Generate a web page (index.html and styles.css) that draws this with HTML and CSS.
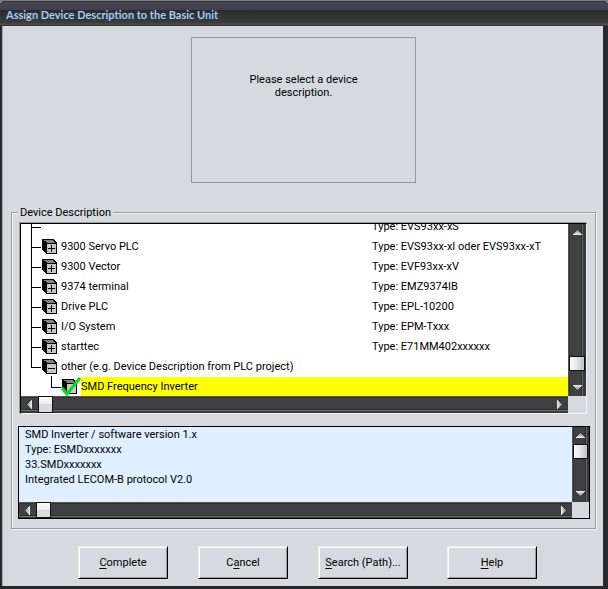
FILE: index.html
```html
<!DOCTYPE html>
<html lang="en">
<head>
<meta charset="utf-8">
<title>Assign Device Description to the Basic Unit</title>
<link rel="stylesheet" href="styles.css">
</head>
<body>
<svg class="defs" aria-hidden="true">
  <defs>
    <symbol id="cube" viewBox="0 0 15 15" shape-rendering="crispEdges">
      <path d="M0 0H12V1H13V2H14V3H15V15H4V14H3V13H2V12H1V11H0Z" fill="#000"/>
      <path d="M2 1H11V2H12V3H13V4H5V3H4V2H2Z" fill="#848484"/>
      <path d="M5 5H14V14H5Z" fill="#c6c6c6"/>
    </symbol>
    <symbol id="plus" viewBox="0 0 15 15" shape-rendering="crispEdges">
      <use href="#cube"/>
      <path d="M6 9H13V10H6ZM9 6H10V13H9Z"/>
    </symbol>
    <symbol id="minus" viewBox="0 0 15 15" shape-rendering="crispEdges">
      <use href="#cube"/>
      <path d="M6 9H13V10H6Z"/>
    </symbol>
    <symbol id="checked" viewBox="0 0 20 19">
      <svg x="1" y="2" width="15" height="15"><use href="#cube"/></svg>
      <path d="M1 11L6 17L19 1" fill="none" stroke="#00e020" stroke-width="3"/>
    </symbol>
    <linearGradient id="metal" x1="0" y1="0" x2="0" y2="1">
      <stop offset="0" stop-color="#8a8a8e"/>
      <stop offset="1" stop-color="#f2f2f2"/>
    </linearGradient>
    <symbol id="arrow" viewBox="0 0 9 5" shape-rendering="crispEdges">
      <path d="M4 0H5V1H6V2H7V3H8V4H9V5H0V4H1V3H2V2H3V1H4Z" fill="url(#metal)"/>
    </symbol>
  </defs>
</svg>

<div class="window">
  <header class="titlebar"><h1>Assign Device Description to the Basic Unit</h1></header>
  <main class="content">
    <section class="preview"><p>Please select a device description.</p></section>

    <fieldset class="group">
      <legend>Device Description</legend>

      <div class="pane tree-pane">
        <ul class="tree" role="tree">
          <li class="node" role="treeitem"><span class="branch"></span><span class="name"></span><span class="type">Type: EVS93xx-xS</span></li>
          <li class="node" role="treeitem"><span class="branch"></span><svg class="icon"><use href="#plus"/></svg><span class="name">9300 Servo PLC</span><span class="type">Type: EVS93xx-xI oder EVS93xx-xT</span></li>
          <li class="node" role="treeitem"><span class="branch"></span><svg class="icon"><use href="#plus"/></svg><span class="name">9300 Vector</span><span class="type">Type: EVF93xx-xV</span></li>
          <li class="node" role="treeitem"><span class="branch"></span><svg class="icon"><use href="#plus"/></svg><span class="name">9374 terminal</span><span class="type">Type: EMZ9374IB</span></li>
          <li class="node" role="treeitem"><span class="branch"></span><svg class="icon"><use href="#plus"/></svg><span class="name">Drive PLC</span><span class="type">Type: EPL-10200</span></li>
          <li class="node" role="treeitem"><span class="branch"></span><svg class="icon"><use href="#plus"/></svg><span class="name">I/O System</span><span class="type">Type: EPM-Txxx</span></li>
          <li class="node" role="treeitem"><span class="branch"></span><svg class="icon"><use href="#plus"/></svg><span class="name">starttec</span><span class="type">Type: E71MM402xxxxxx</span></li>
          <li class="node" role="treeitem"><span class="branch end"></span><svg class="icon"><use href="#minus"/></svg><span class="name">other (e.g. Device Description from PLC project)</span></li>
          <li class="node child" role="treeitem" aria-selected="true"><span class="branch end"></span><svg class="icon-checked"><use href="#checked"/></svg><span class="name">SMD Frequency Inverter</span></li>
        </ul>
        <div class="scroll vertical">
          <button class="step" aria-label="Scroll up"><svg class="up"><use href="#arrow"/></svg></button>
          <span class="track"></span><span class="thumb"></span><span class="rest"></span>
          <button class="step" aria-label="Scroll down"><svg class="down"><use href="#arrow"/></svg></button>
        </div>
        <div class="scroll horizontal">
          <button class="step" aria-label="Scroll left"><svg class="left"><use href="#arrow"/></svg></button>
          <span class="thumb"></span><span class="track"></span>
          <button class="step" aria-label="Scroll right"><svg class="right"><use href="#arrow"/></svg></button>
        </div>
      </div>

      <div class="pane info-pane">
        <textarea class="info" aria-label="Device information" wrap="off" readonly>SMD Inverter / software version 1.x
Type: ESMDxxxxxxx
33.SMDxxxxxxx
Integrated LECOM-B protocol V2.0</textarea>
        <div class="scroll vertical">
          <button class="step" aria-label="Scroll up"><svg class="up"><use href="#arrow"/></svg></button>
          <span class="thumb"></span><span class="track"></span>
          <button class="step" aria-label="Scroll down"><svg class="down"><use href="#arrow"/></svg></button>
        </div>
        <div class="scroll horizontal">
          <button class="step" aria-label="Scroll left"><svg class="left"><use href="#arrow"/></svg></button>
          <span class="thumb"></span><span class="track"></span>
          <button class="step" aria-label="Scroll right"><svg class="right"><use href="#arrow"/></svg></button>
        </div>
      </div>
    </fieldset>

    <footer class="actions">
      <div class="primary">
        <button class="action"><u>C</u>omplete</button>
        <button class="action">C<u>a</u>ncel</button>
        <button class="action"><u>S</u>earch (Path)...</button>
      </div>
      <button class="action"><u>H</u>elp</button>
    </footer>
  </main>
</div>
</body>
</html>
```
FILE: styles.css
```css
* { box-sizing: border-box; }

body {
  margin: 0;
  background: #808080;
  color: #000;
  font: 11px/13px Roboto, "Liberation Sans", sans-serif;
}

button, textarea { font: inherit; color: inherit; }

.defs { position: absolute; width: 0; height: 0; }

.window {
  display: flex;
  flex-direction: column;
  min-height: 100vh;
  padding: 0 5px 3px 2px;
  border-top: 1px solid #808080;
  border-radius: 6px 6px 0 0;
  background: #29292d;
}

.titlebar {
  height: 25px;
  margin: 0 -5px 0 -2px;
  padding: 5px 6px 0;
  border-top: 1px solid #2c2f33;
  border-bottom: 1px solid #333;
  border-radius: 5px 5px 0 0;
  background: linear-gradient(#454954 0, #3e404e 8px, #2b2b2b 8px, #3c3c3c 21px, #4d4d4d 22px, #4d4d4d 100%);
}

h1 {
  margin: 0;
  color: #a2ccfb;
  font: bold 11px/15px Lato, "Open Sans", sans-serif;
}

.content {
  flex: 1;
  padding: 11px 7px 7px 8px;
  border-left: 1px solid #a8a8ac;
  background: #d6dadf;
}

.preview {
  width: 225px;
  height: 146px;
  margin: 0 auto 23px;
  padding: 35px 50px;
  border: 1px solid #96989b;
  text-align: center;
}

.preview p { margin: 0; }

.group {
  min-width: 0;
  margin: 0;
  padding: 4px 5px 9px 6px;
  border: 1px solid #989a9c;
  box-shadow: 1px 1px #f4f4f4, inset 1px 1px #f4f4f4;
}

.group legend {
  padding: 0 2px;
  background: #d6dadf;
}

.pane {
  display: grid;
  border: 1px solid #000;
}

.tree-pane {
  grid-template: 172px 17px / 1fr 18px;
  margin: 0 3px 12px 2px;
  border-right-color: #f4f4f4;
  border-bottom-color: #f4f4f4;
  box-shadow: -1px -1px #989a9c;
}

.info-pane { grid-template: 75px 16px / 1fr 17px; }

.tree {
  display: flex;
  flex-direction: column;
  justify-content: flex-end;
  min-width: 0;
  margin: 0;
  padding: 0 0 0 10px;
  overflow: hidden;
  background: #fff;
  list-style: none;
}

.node {
  display: flex;
  flex: none;
  align-items: center;
  height: 20px;
  white-space: nowrap;
}

.branch {
  width: 11px;
  height: 20px;
  background:
    linear-gradient(#000, #000) 0 0 / 1px 100% no-repeat,
    linear-gradient(#000, #000) 0 11px / 10px 1px no-repeat;
}

.branch.end { background-size: 1px 11px, 10px 1px; }

.icon {
  width: 15px;
  height: 15px;
  margin-top: 1px;
}

.name { flex: 1; padding-left: 4px; }

.type { width: 196px; }

.child { padding-left: 20px; }

.child .branch { width: 10px; }

.icon-checked { width: 20px; height: 19px; }

.child .name {
  align-self: flex-end;
  padding: 0;
  background: #ff0;
  line-height: 19px;
}

.info {
  display: block;
  width: 100%;
  height: 100%;
  padding: 0 6px;
  overflow: hidden;
  border: 0;
  outline: 0;
  background: #dfefff;
  line-height: 15px;
  resize: none;
}

.scroll { display: flex; }

.scroll.vertical {
  flex-direction: column;
  background: linear-gradient(90deg, #555 0 1px, #333 1px 2px, #404040 2px 13px, #2f2f2f 13px 14px, #666 14px 15px, #383838 15px);
}

.scroll.horizontal {
  background: linear-gradient(#555 0 1px, #333 1px 2px, #404040 2px 13px, #2f2f2f 13px 14px, #707070 14px 15px, #383838 15px);
}

.step {
  display: grid;
  place-items: center;
  flex: 0 0 17px;
  padding: 0;
  border: 0;
  background: none;
}

.step svg { width: 9px; height: 5px; }
.step .down { transform: rotate(180deg); }
.step .left { transform: rotate(-90deg); }
.step .right { transform: rotate(90deg); }

.track { flex: 1; }
.rest { flex: 0 0 8px; }

.thumb {
  flex: 0 0 15px;
  border: 1px solid #111;
  background: linear-gradient(90deg, #fafafa, #e8e8e8 45%, #c8c8cb 90%);
}

.vertical .thumb { margin: 0 1px; }

.horizontal .thumb { background: linear-gradient(#fafafa, #eee 48%, #d8d8da 50%, #ddd); }

.actions {
  display: flex;
  justify-content: center;
  gap: 39px;
  padding-top: 17px;
  padding-left: 8px;
}

.primary { display: flex; gap: 30px; }

.action {
  width: 90px;
  height: 33px;
  padding: 0;
  border: 1px solid;
  border-color: #eee #000 #000 #eee;
  background: #d6dadf;
  box-shadow: inset 1px 1px #fff, inset -1px -1px #989a9c;
}

.action u { text-underline-offset: 2px; }
```
